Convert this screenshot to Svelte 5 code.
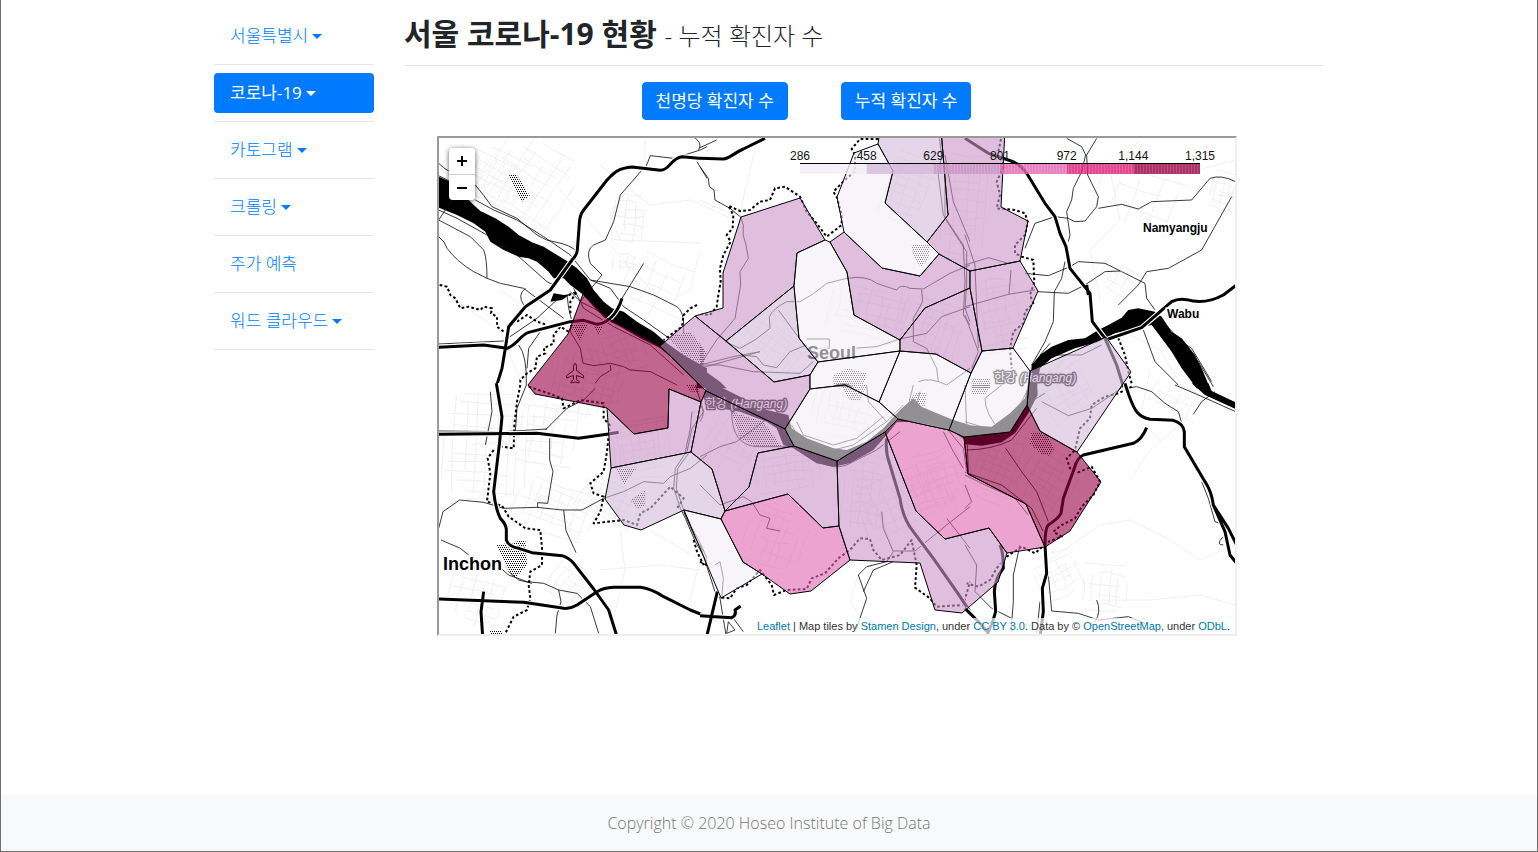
<script>
  const menu = [
    { label: '서울특별시', caret: true },
    { label: '코로나-19', caret: true, active: true },
    { label: '카토그램', caret: true },
    { label: '크롤링', caret: true },
    { label: '주가 예측', caret: false },
    { label: '워드 클라우드', caret: true }
  ];

  const ramp = ['#f1eef6', '#d4b9da', '#c994c7', '#df65b0', '#dd1c77', '#980043'];
  const ticks = ['286', '458', '629', '801', '972', '1,144', '1,315'];

  // District outlines: colour class and points
  const districts = [
    [2, '741,217 800,198 825,240 797,253 794,286 726,341 695,316 723,308 723,273'],
    [1, '794,286 726,341 774,382 810,375 818,362 799,338'],
    [0, '825,240 830,242 847,272 854,315 900,340 900,351 818,362 799,338 794,286 797,253'],
    [2, '695,316 726,341 774,382 810,375 810,389 785,429 706,391 660,346'],
    [5, '583,294 607,318 660,346 706,391 701,402 669,389 668,428 634,434 607,408 535,394 528,385 568,334'],
    [2, '607,408 634,434 668,428 669,389 701,402 691,452 611,468'],
    [1, '611,468 691,452 712,469 725,511 721,519 684,510 641,530 624,525 605,499'],
    [0, '684,510 721,519 743,562 762,574 721,598'],
    [2, '706,391 785,429 794,446 758,453 749,487 725,511 712,469 691,452 701,402'],
    [2, '794,446 837,461 839,526 823,528 788,494 725,511 749,487 758,453'],
    [3, '725,511 788,494 823,528 839,526 850,560 811,591 790,594 762,574 743,562 721,519'],
    [2, '837,461 885,432 916,511 945,539 989,528 1007,553 998,582 962,613 935,610 920,563 850,560 839,526'],
    [3, '885,432 898,419 949,430 964,437 968,474 1026,504 1045,547 1007,553 989,528 945,539 916,511'],
    [5, '964,437 1010,432 1027,405 1040,431 1077,452 1101,482 1070,531 1045,547 1026,504 968,474'],
    [1, '1027,405 1030,371 1106,337 1131,372 1077,452 1040,431'],
    [0, '982,351 1013,348 1030,371 1027,405 1010,432 964,437 949,430 971,373'],
    [0, '900,351 936,354 971,373 949,430 898,419 879,402'],
    [0, '818,362 900,351 879,402 845,385 810,389 810,375'],
    [0, '810,389 845,385 879,402 898,419 885,432 837,461 794,446 785,429'],
    [2, '830,242 844,232 882,268 920,276 939,254 970,271 970,288 925,308 900,340 854,315 847,272'],
    [2, '900,340 925,308 970,288 982,351 971,373 936,354 900,351'],
    [2, '970,271 1020,261 1038,291 1013,348 982,351 970,288'],
    [2, '941,130 948,215 927,242 939,254 970,271 1020,261 1028,221 1001,207 1005,130'],
    [1, '880,130 878,144 893,171 885,203 927,242 948,215 941,130'],
    [0, '854,153 878,144 893,171 885,203 927,242 939,254 920,276 882,268 844,232 837,197']
  ];

  // Base map sheets, drawn at three units per map pixel
  const sheets = [
    {
      x: 437, y: 135,
      water: 'M5 125L40 140L75 175L100 200L130 228L175 250L215 275L245 300L285 322L320 335L360 360L390 378L420 400L450 430L470 465L500 500L525 520L560 530L600 560L650 590L690 625L740 660L810 700V760L790 750L730 690L670 640L610 610L550 575L510 556L470 515L435 476L400 450L380 430L350 430L335 410L300 380L275 370L245 365L200 345L160 320L145 290L110 265L60 240L5 218ZM340 500L350 475L380 480L400 478L375 495Z',
      thick: 'M810 72L735 65C700 70 700 105 670 106L585 96C540 100 530 115 510 135L440 225Q428 240 427 265L421 345Q420 360 405 375L340 465L265 515L215 575L205 640L195 700L178 755M5 637L140 630L210 640C240 630 250 600 275 592L400 560L440 556L480 568C510 565 540 540 555 490',
      thin: 'M5 85Q20 100 35 108M5 122L40 140M115 195L170 225L240 255L320 305L400 360L460 435L520 460L560 515L620 555L690 605M115 150Q140 180 165 215L240 250L300 300Q330 320 360 322Q400 330 420 350M5 225L60 250L150 300L240 360L330 440L350 450M45 195L5 255L100 305L140 345Q150 370 150 430L190 445L260 460L380 550M5 305Q25 320 30 340Q60 380 110 410L150 430M615 105L550 180L540 220L530 260L505 315L470 330Q445 345 460 385L495 420L430 500M620 385L555 490M460 435L580 455L650 480L720 515Q740 530 740 570V595M625 100L640 62L710 70L790 45L810 35M780 80L810 130M760 0Q800 20 785 45M390 480L395 520L405 560L400 590L430 640L438 685L470 692L520 685L560 695L580 705L640 710L690 735L720 750M520 690L522 705L490 725L475 745M5 627L200 618L300 550L370 485M265 460Q240 480 260 510M245 630Q270 660 268 750M310 590L275 640L270 700M400 470L430 500L470 520L540 565L640 615L700 660L760 720L800 750M410 460L440 520L530 575L640 630L740 720',
      dots: 'M8 450L30 455L40 480L55 490L70 520L95 515L130 525L140 515L165 520L162 535L180 545L180 575L200 590M240 560L270 540L300 560L330 570M395 480L420 470L400 500L400 540M780 510L760 520L740 540L735 575L700 600L680 615M395 590L370 575L350 600L350 625L320 640L325 655L300 665L295 700L270 715L250 735L250 750',
      hatch: 'M215 118L238 118L278 182L255 200ZM395 565L455 565L430 620ZM470 572L498 572L485 598ZM690 605L760 590L800 640V690L740 660Z'
    },
    {
      x: 700, y: 135,
      water: 'M-10 690L60 740L80 760H-10ZM395 755Q430 735 460 755Z',
      thick: 'M0 70L70 72C90 70 100 55 130 42L195 10',
      thin: 'M0 95L25 130L28 155L42 165L45 195L90 220L122 246L130 270Q125 300 138 330L145 370L120 410L122 450L105 550L50 615L0 690M0 38L50 15M75 620L120 640L165 615L210 580L208 545Q220 520 260 500L300 500Q340 480 380 445L440 430Q500 420 530 445L590 465Q600 445 630 460L670 462L750 415L810 390M235 525L320 640M125 660L170 665L190 690L230 698L270 650L320 630M320 612L388 612V640L360 640M460 640L530 635L600 612L680 595L725 545L810 515M665 465L668 500L640 550V620L680 640L710 700L715 740M0 690L100 665L180 650L0 700M0 690L60 690L160 710L300 715L340 680M725 10L735 120L735 250L780 320L800 350V450L795 520L810 560M718 10L725 60L715 120L730 240L790 330L795 440L790 540L810 570M735 60L760 200L810 320M655 740Q690 725 740 750L810 700',
      dots: 'M535 12L480 12L455 42L465 60L465 110L440 130L400 170L412 190L425 240L425 270L380 305L350 265L320 230L300 185L255 155L225 160L210 195L180 200L150 225L120 228L85 212L100 240L98 280L80 300L92 320L70 360L60 400L62 440L55 480L50 515L30 540L5 538',
      hatch: 'M635 328H690L685 375L662 395L640 365ZM0 630L20 650L10 690L0 690ZM445 700L500 715L490 750H400L400 720Z'
    },
    {
      x: 965, y: 135,
      water: 'M195 760L200 690L225 660L260 635L310 615L360 610L400 585L430 570L470 548L490 525L520 520L570 530L590 545L620 590L650 610L690 660L710 700L735 760H695L650 700L620 650L590 610L560 570L520 578L450 595L400 620L330 640L260 670L225 700L215 760Z',
      thick: 'M0 10L70 55L130 75Q165 85 185 115L240 205L270 245L285 295L303 335L315 400L375 475L382 560L420 610L455 690L475 755M365 450L370 480M430 612L530 578L620 500Q640 490 665 494Q720 510 775 480L815 450',
      thin: 'M305 10L350 35L362 60L350 110L325 160L320 195L305 230L315 300L310 320M395 10L365 60L368 120L400 185L395 215L360 258L330 260L310 250L270 245L210 265L180 340M400 220L470 208L520 222L560 200L680 195L735 130Q770 118 812 140M800 185L710 345L610 400L545 410L520 450L460 510M180 415L250 422L315 395L340 380L420 385L470 410L540 445L545 490L570 525M218 470L310 475L360 450L420 410L465 408M300 380L290 430L268 470L265 560L240 620L200 690M535 585L570 680L640 750M0 390L70 368L130 385L165 378M0 515L130 478L210 465M132 478L138 405M200 690L260 660L350 660L410 630M0 300L30 390L40 640M620 600L680 640L740 740M0 540L40 650L20 700M225 660L255 625M580 545L640 610L700 680L745 755',
      dots: 'M108 12L98 60L118 90L95 140L105 180L95 220L150 225L180 235L188 260L180 300L150 330L150 355L170 365L205 375L208 440L195 480L205 505L180 530L175 565L145 590L135 640L140 700M430 600L460 610L480 660L490 710L500 745',
      hatch: 'M20 730H75V760H20Z'
    },
    {
      x: 437, y: 385,
      water: '',
      thick: 'M178 -5L195 95L188 170L170 320Q175 370 190 400Q210 420 208 440V465Q215 485 245 490L285 503L375 512Q395 518 410 535L470 612L515 675L540 755M5 148L300 145L425 160L515 147L545 142M5 642L260 652L380 670Q400 672 420 660L480 620Q500 608 530 607H610Q640 610 680 635L760 675L810 695M140 620L132 680L137 755',
      thin: 'M5 430L18 380L68 345L140 352L200 370L300 367L375 375L435 375L500 340L560 320L620 290L680 295L700 275L760 250L810 210M338 160V225L348 260L332 355L302 353V367M380 375L387 437L417 503M12 465L70 490L95 510M180 540L215 570L270 590L320 595L365 615L420 625L460 665L485 745M365 615L372 650L360 690L355 745M475 10L440 45L390 70L325 135M5 138L200 140L330 132M160 20L165 80L145 180M745 205L715 250L710 310L730 370L745 400L775 470L810 530M755 205L722 250L718 310L740 375L760 420L790 475L810 520M765 80L760 130L745 200M775 0L800 80L765 130L750 200M740 380L775 460L800 500M215 560L245 585L285 595M268 0L240 70L235 140',
      dots: 'M250 0L240 50L232 120L230 190L195 185M170 195L152 220L160 265L150 350L195 362L215 395L265 430L310 435L315 490L315 540L280 560L275 600L280 640L270 675L230 695L205 745M275 5L335 25L375 40L380 70L430 45L500 55L500 100L518 120L510 200L500 260L460 295L470 325L500 335L490 380L470 415L560 405L600 420L610 385L640 370L700 305L740 340L720 370M770 465L780 500L800 540',
      hatch: 'M180 480L265 465L270 540L235 580L215 560ZM535 248H600L560 300ZM580 345L625 315L625 365L600 370ZM155 735H190L200 750H160ZM750 0H785V20H760Z'
    },
    {
      x: 700, y: 385,
      water: 'M20 -10L50 0L150 50L200 75L265 90L275 130L320 160L400 190L440 195L500 170L550 130L600 75L640 40L665 65L700 80L760 105L810 120V175L750 135L690 120L640 110L590 112L560 150L520 195L450 235L400 245L350 235L280 190L250 180L230 130L200 110L120 80L60 70L10 40Z',
      thick: 'M0 692L95 698Q110 690 105 675L122 663M52 620L20 755M560 160Q555 200 570 240L600 340Q608 400 640 440L700 520L770 620L810 680',
      thin: 'M0 215L60 185L110 170L190 110L240 75M95 80Q95 180 170 185L280 185L380 240Q420 255 460 230L530 195L600 140M0 300L60 360L130 335L155 350L180 390L210 400L200 430L240 438M545 380L550 430L580 500L560 530L500 545L475 570L500 640L470 730M580 530L520 555L490 620M580 498L645 498L740 420L810 365M740 400L810 490M0 480L45 620L60 640L78 750M45 540L60 530L70 580L65 640M275 120L300 165L400 195L460 180L560 110L610 60M290 110L310 150L400 180L470 160L550 95M640 0L620 80M500 0L505 50L560 110M600 90L740 130L790 190L800 260M730 140L760 200L790 250M85 710L80 745L105 735ZM100 700L130 740M0 60Q20 80 0 110M660 20L650 60L730 100',
      dots: 'M0 530L20 540M65 638L90 640L110 610L140 600L180 555L215 600L222 630L260 615L320 612L335 580L375 565L415 520L450 495L480 460L510 462L520 495L545 525L600 510L635 465L650 540L645 608L690 640L710 665L790 660L810 590',
      hatch: 'M95 80L190 110L245 185H170L120 160ZM420 0H500L480 45H450ZM650 20L680 25L675 65L625 45Z'
    },
    {
      x: 965, y: 385,
      water: 'M190 -10L180 40L135 85L80 125L0 120V178L50 182L110 172L150 145L190 85L218 30L216 -10ZM680 -5L720 30L812 72V52L740 18L730 -5Z',
      thick: 'M480 -5Q500 60 515 80Q530 98 555 103L625 106Q655 115 658 140V185L720 290Q740 320 745 360L790 430L815 480M745 360L780 440L795 510L815 535M545 128Q530 165 505 175L355 210Q335 220 328 250L295 340L288 385Q280 400 250 420Q240 430 240 480L245 565L232 610L235 680L225 755M105 480Q115 500 115 550Q90 580 88 620L92 680Q85 710 70 740L65 755M0 670L50 720L65 740',
      thin: 'M485 10L515 5L560 20L600 55L640 80L655 130M630 0L700 30L812 80M750 20L710 50L685 88M122 190L170 260L215 320L250 410M0 262L110 300L200 370L235 440M0 270L60 300L150 340L190 390M0 480L35 540L30 620L80 670L140 700M165 480L145 570V650L138 740M250 570L260 678L340 685L400 705L490 695L540 715M225 650L215 745M395 645Q410 680 390 710M710 290L730 340L750 410L765 415M775 455Q750 480 775 480M240 25L180 60M0 0L10 260M230 50L310 92L380 70L440 30L480 0M110 0L60 40Q60 90 110 140M200 -10L160 70L80 135L0 110M0 195Q80 195 140 165L215 70M0 300L20 350L0 370',
      dots: 'M500 5L460 25L420 35L380 60L375 100L345 130L330 195L305 220L315 250L340 262L380 245L405 290L385 330L350 365L330 400L290 420L265 440L290 455L250 470L210 505L170 485L125 515L95 550L75 585L40 605L5 595',
      hatch: 'M200 140L240 142L268 190L255 212L225 205L195 175ZM20 0H75L60 30H20Z'
    }
  ];

  // Street blocks: centre, half size, angle, spacing
  const blocks = [
    [530, 185, 45, 42, 34, 11], [490, 175, 38, 25, 28, 9], [630, 220, 16, 26, 5, 9], [627, 263, 14, 8, 4, 6],
    [485, 450, 42, 55, 3, 10], [540, 430, 36, 34, 8, 9], [590, 385, 36, 34, 15, 8], [640, 450, 34, 30, -9, 7],
    [555, 510, 40, 25, 20, 9], [480, 600, 32, 30, 14, 10], [570, 585, 20, 20, 36, 7], [610, 500, 30, 26, 28, 8],
    [905, 500, 48, 28, -24, 9], [940, 480, 36, 30, -17, 8], [1000, 470, 32, 38, 22, 8], [1050, 480, 28, 28, 32, 8],
    [865, 490, 22, 42, 6, 9], [790, 470, 34, 22, -8, 8], [740, 440, 30, 28, 32, 8], [770, 345, 32, 28, 36, 8],
    [870, 310, 40, 30, 12, 9], [930, 330, 32, 28, 18, 8], [1000, 315, 24, 36, -12, 8], [965, 210, 22, 55, 5, 10],
    [910, 190, 24, 34, 20, 9], [850, 415, 38, 25, 14, 9], [1070, 390, 28, 28, -30, 9], [1060, 575, 24, 24, -24, 8],
    [1105, 590, 22, 26, 4, 9], [1225, 190, 15, 18, 14, 6], [775, 540, 30, 30, 20, 10], [620, 350, 30, 22, -20, 8],
    [1180, 400, 28, 22, 28, 12], [1120, 280, 20, 14, 30, 8], [1140, 200, 45, 28, 20, 18], [660, 290, 36, 30, 24, 18]
  ];

  function streets() {
    let seed = 11;
    const rnd = () => (seed = (seed * 16807) % 2147483647) / 2147483647;
    let d = '';
    for (const [cx, cy, w, h, angle, step] of blocks) {
      const c = Math.cos((angle * Math.PI) / 180);
      const s = Math.sin((angle * Math.PI) / 180);
      const at = (u, v) => `${(cx + u * c - v * s).toFixed(1)} ${(cy + u * s + v * c).toFixed(1)}`;
      for (let v = -h; v <= h; v += step * (0.7 + rnd() * 0.6)) {
        d += `M${at(-w * (0.3 + rnd() * 0.7), v)}L${at(0, v + rnd() * 4 - 2)}L${at(w * (0.3 + rnd() * 0.7), v + rnd() * 6 - 3)}`;
      }
      for (let u = -w; u <= w; u += step * (0.7 + rnd() * 0.6)) {
        d += `M${at(u, -h * (0.3 + rnd() * 0.7))}L${at(u + rnd() * 4 - 2, 0)}L${at(u, h * (0.3 + rnd() * 0.7))}`;
      }
    }
    return d;
  }
  const streetPath = streets();
  const lanes =
    'M645 138V165L610 215L620 240L700 243M600 165L650 205L690 200L735 220M500 290L560 330M439 290L500 330L520 380M700 250L690 290L672 300M560 190L660 300M1140 140L1110 170L1120 220L1090 250L1100 300M1040 170L1110 160L1180 175L1235 160M1050 560L1100 525L1130 520L1170 540L1200 560L1235 545M1130 480L1150 450L1180 425M1100 600L1150 600L1200 595L1235 605M620 530L625 570L610 634M650 530L700 560L690 600M600 570L660 565L700 570M860 570L850 600L870 634M1120 330L1160 350L1190 400M1150 370L1140 420L1160 440M755 150L745 190L740 215M700 200L735 215';
</script>

<div class="page">
  <div class="container">
    <nav class="sidebar" aria-label="메뉴">
      <ul>
        {#each menu as item}
          <li>
            <a href="#menu" class:active={item.active}>{item.label}{#if item.caret}<span class="caret"></span>{/if}</a>
          </li>
        {/each}
      </ul>
    </nav>

    <main>
      <h1>서울 코로나-19 현황 <small>- 누적 확진자 수</small></h1>
      <div class="actions">
        <button type="button">천명당 확진자 수</button>
        <button type="button">누적 확진자 수</button>
      </div>

      <div class="map">
        <svg viewBox="439 138 796 496" preserveAspectRatio="xMidYMid slice" role="img" aria-label="서울 지도">
          <defs>
            <pattern id="hatch" width="6" height="12" patternUnits="userSpaceOnUse">
              <path d="M0 0h3v3h-3zM3 6h3v3h-3z" />
            </pattern>
            <pattern id="bars" width="3" height="10" patternUnits="userSpaceOnUse">
              <rect width="1" height="10" fill="#fff" opacity=".16" />
            </pattern>
          </defs>

          <path class="street" d={streetPath} />
          <path class="street" d={lanes} />

          {#each sheets as s}
            <g transform="translate({s.x} {s.y}) scale(.33333)">
              <path d={s.water} />
              <path class="hatch" d={s.hatch} />
              <path class="thin" d={s.thin} />
              <path class="dots" d={s.dots} />
            </g>
          {/each}
          {#each sheets as s}
            <g transform="translate({s.x} {s.y}) scale(.33333)">
              <path class="thick-case" d={s.thick} />
              <path class="thick" d={s.thick} />
            </g>
          {/each}

          <path class="plane" d="M575 363.500q1.500 0 1.500 3v4l7 5v2.500l-7-2.500v4l2.500 2v1.500l-4-1-4 1v-1.500l2.500-2v-4l-7 2.500v-2.500l7-5v-4q0-3 1.500-3z" />

          <g class="place">
            <text x="807" y="359" font-size="18">Seoul</text>
            <text x="443" y="570" font-size="18">Inchon</text>
            <text x="1143" y="232" font-size="12">Namyangju</text>
            <text x="1167" y="318" font-size="12">Wabu</text>
          </g>
          <g class="river">
            <text x="705" y="408"><tspan class="ko">한강</tspan> (Hangang)</text>
            <text x="994" y="382"><tspan class="ko">한강</tspan> (Hangang)</text>
          </g>

          <g class="districts">
            {#each districts as [level, points]}
              <polygon {points} fill={ramp[level]} />
            {/each}
          </g>

          <g class="legend">
            {#each ramp as color, i}
              <rect x={800 + (i * 400) / 6} y="164" width={400 / 6} height="10" fill={color} />
            {/each}
            <rect x="933" y="164" width="267" height="10" fill="url(#bars)" />
            <path d="M800 163.500H1200" />
            {#each ticks as tick, i}
              <text x={800 + (i * 400) / 6} y="160">{tick}</text>
            {/each}
          </g>
        </svg>

        <div class="zoom">
          <button type="button" aria-label="Zoom in"><svg viewBox="0 0 12 12"><path d="M6 1v10M1 6h10" /></svg></button>
          <button type="button" aria-label="Zoom out"><svg viewBox="0 0 12 12"><path d="M1 6h10" /></svg></button>
        </div>

        <div class="credit">
          <a href="#leaflet">Leaflet</a> | Map tiles by <a href="#stamen">Stamen Design</a>, under <a href="#cc">CC BY 3.0</a>. Data by © <a href="#osm">OpenStreetMap</a>, under <a href="#odbl">ODbL</a>.
        </div>
      </div>
    </main>
  </div>

  <footer>Copyright © 2020 Hoseo Institute of Big Data</footer>
</div>

<style>
  :global(body) {
    background: #fff;
  }
  .page {
    box-sizing: border-box;
    min-height: 100vh;
    display: flex;
    flex-direction: column;
    border: 1px solid #6f6f6f;
    border-top: 0;
    color: #212529;
    font: 16px/24px 'Open Sans', 'Noto Sans CJK KR', sans-serif;
  }
  .container {
    flex: 1;
    box-sizing: border-box;
    width: 100%;
    max-width: 1140px;
    margin: 0 auto;
    padding: 0 15px;
    display: grid;
    grid-template-columns: 160px minmax(0, 1fr);
    align-items: start;
    gap: 30px;
  }
  .sidebar {
    padding-top: 16px;
  }
  ul {
    list-style: none;
    margin: 0;
    padding: 0;
  }
  li {
    padding-bottom: 8px;
    margin-bottom: 8px;
    border-bottom: 1px solid #e5e5e5;
  }
  .sidebar a {
    display: flex;
    align-items: center;
    gap: 4px;
    padding: 8px 16px;
    border-radius: 4px;
    color: #007bff;
    font-size: 17px;
    font-weight: 300;
    text-decoration: none;
  }
  .sidebar a.active {
    background: #007bff;
    color: #fff;
    font-weight: 400;
  }
  .caret {
    border: 5px solid transparent;
    border-top-color: currentColor;
    border-bottom: 0;
  }
  h1 {
    margin: 0;
    padding: 14px 0 9px;
    border-bottom: 1px solid #e5e5e5;
    font-size: 30px;
    line-height: 40px;
    font-weight: 700;
  }
  small {
    font-size: 24px;
    font-weight: 300;
  }
  .actions {
    display: flex;
    justify-content: center;
    gap: 53px;
    padding: 16px 115px 16px 0;
  }
  .actions button {
    padding: 6px 13px;
    border: 1px solid #007bff;
    border-radius: 4px;
    background: #007bff;
    color: #fff;
    font: inherit;
    font-size: 17px;
  }
  .map {
    position: relative;
    box-sizing: border-box;
    max-width: 800px;
    height: 500px;
    margin-left: 33px;
    border: 2px solid;
    border-color: #9a9a9a #eee #eee #9a9a9a;
    overflow: hidden;
    font-family: 'Liberation Sans', sans-serif;
  }
  .map > svg {
    display: block;
    width: 100%;
    height: 100%;
  }
  .street {
    fill: none;
    stroke: #f0f0f0;
    stroke-width: 1;
  }
  .hatch {
    fill: url(#hatch);
  }
  .thin,
  .thick,
  .thick-case,
  .dots {
    fill: none;
    stroke: #000;
    stroke-linejoin: round;
  }
  .thin {
    stroke: #111;
    stroke-width: 2.5;
  }
  .thick {
    stroke-width: 9;
  }
  .thick-case {
    stroke: #fff;
    stroke-width: 16;
  }
  .dots {
    stroke-width: 6;
    stroke-dasharray: 8 7;
  }
  .plane {
    fill: none;
    stroke: #000;
    stroke-width: 1;
    stroke-linejoin: round;
  }
  .place text {
    font-weight: 700;
    stroke: #fff;
    stroke-width: 3px;
    paint-order: stroke;
  }
  .river text {
    fill: #fff;
    font-size: 12px;
    font-style: italic;
    stroke: #111;
    stroke-width: 3px;
    stroke-linejoin: round;
    paint-order: stroke;
  }
  .ko {
    font-family: 'Noto Sans CJK KR', sans-serif;
    font-size: 12px;
    font-style: normal;
  }
  .districts polygon {
    fill-opacity: 0.6;
    stroke: #000;
    stroke-width: 1;
    stroke-linejoin: round;
  }
  .legend rect {
    opacity: 0.8;
  }
  .legend path {
    stroke: #000;
  }
  .legend text {
    font-size: 12px;
    text-anchor: middle;
    fill: #111;
  }
  .zoom {
    position: absolute;
    top: 10px;
    left: 10px;
    display: grid;
    border-radius: 4px;
    overflow: hidden;
    box-shadow: 0 1px 5px rgba(0, 0, 0, 0.65);
  }
  .zoom button {
    display: grid;
    place-items: center;
    width: 26px;
    height: 26px;
    padding: 0;
    border: 0;
    background: #fff;
  }
  .zoom button + button {
    border-top: 1px solid #ccc;
  }
  .zoom svg {
    width: 12px;
    height: 12px;
    fill: none;
    stroke: #000;
    stroke-width: 2;
  }
  .credit {
    position: absolute;
    right: 0;
    bottom: 0;
    padding: 0 5px;
    background: rgba(255, 255, 255, 0.7);
    color: #333;
    font-size: 11px;
    line-height: 16px;
  }
  .credit a {
    color: #0078a8;
    text-decoration: none;
  }
  footer {
    padding: 16px;
    background: #f8f9fa;
    color: #777;
    font-weight: 300;
    text-align: center;
  }
</style>
